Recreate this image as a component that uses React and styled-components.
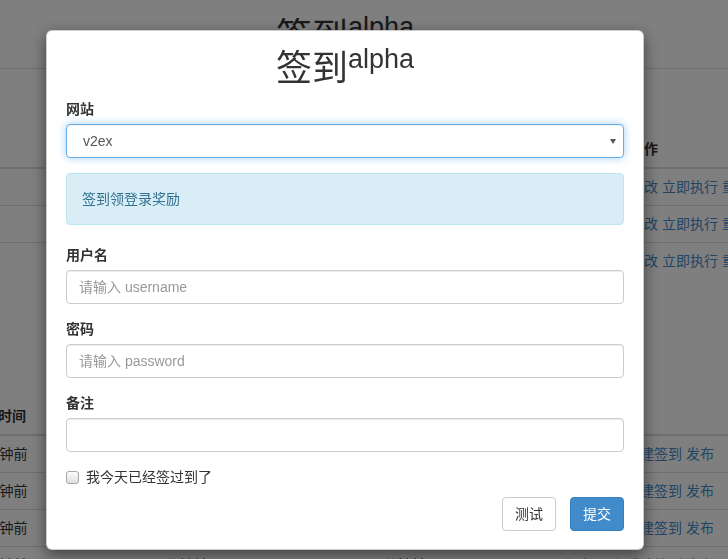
import React from "react";
import styled, { createGlobalStyle } from "styled-components";

const GlobalStyle = createGlobalStyle`
  *, *::before, *::after { box-sizing: border-box; }
  html, body { margin: 0; padding: 0; overflow: hidden; }
  body {
    font-family: "Liberation Sans", Arial, "Noto Sans CJK SC", sans-serif;
    font-size: 14px;
    line-height: 20px;
    color: #333;
    background: #fff;
  }
`;

const Page = styled.div`
  width: 728px;
  height: 559px;
  overflow: hidden;
`;

const Header = styled.header`
  padding: 17px 0 11px;
  border-bottom: 1px solid #ddd;
`;

const Title = styled.h1`
  margin: ${(p) => (p.$modal ? "0 0 10px" : "0")};
  width: ${(p) => (p.$modal ? "auto" : "690px")};
  font-size: 36px;
  line-height: 40px;
  font-weight: 400;
  color: #333;
  text-align: center;
`;

const Sup = styled.sup`
  font-size: 75%;
  line-height: 0;
  position: relative;
  top: -0.5em;
  vertical-align: baseline;
`;

const Table = styled.table`
  width: 800px;
  margin-left: -38px;
  margin-top: ${(p) => p.$top}px;
  border-collapse: collapse;
  table-layout: fixed;
`;

const Th = styled.th`
  text-align: left;
  padding: 8px;
  line-height: 20px;
  font-weight: bold;
  border-bottom: 2px solid #ddd;
  white-space: nowrap;
`;

const Td = styled.td`
  padding: 8px;
  line-height: 20px;
  border-top: 1px solid #ddd;
  white-space: nowrap;
`;

const Link = styled.a`
  color: #428bca;
  text-decoration: none;
  margin-right: 4px;
`;

const Layer = styled.div`
  position: fixed;
  inset: 0;
  background: rgba(0, 0, 0, 0.5);
  padding: 30px 0 0 46px;
`;

const Dialog = styled.div`
  width: 598px;
  background: #fff;
  border: 1px solid rgba(0, 0, 0, 0.2);
  border-radius: 6px;
  box-shadow: 0 5px 15px rgba(0, 0, 0, 0.5);
  padding: 18px 19px 18px;
`;

const FormGroup = styled.div`
  margin-bottom: 15px;
`;

const Label = styled.label`
  display: block;
  font-weight: bold;
  margin-bottom: 5px;
`;

const SelectWrap = styled.div`
  position: relative;
`;

const Select = styled.select`
  display: block;
  width: 100%;
  height: 34px;
  padding: 0 16px;
  font: inherit;
  color: #555;
  background: #fff;
  border: 1px solid #66afe9;
  border-radius: 4px;
  outline: none;
  appearance: none;
  box-shadow: inset 0 1px 1px rgba(0, 0, 0, 0.075), 0 0 8px rgba(102, 175, 233, 0.6);
`;

const Caret = styled.span`
  position: absolute;
  right: 8px;
  top: 15px;
  width: 0;
  height: 0;
  border-left: 3px solid transparent;
  border-right: 3px solid transparent;
  border-top: 5px solid #555;
  pointer-events: none;
`;

const Alert = styled.div`
  padding: 15px;
  margin-bottom: 20px;
  border: 1px solid #bce8f1;
  border-radius: 4px;
  background: #d9edf7;
  color: #31708f;
`;

const Input = styled.input`
  display: block;
  width: 100%;
  height: 34px;
  padding: 6px 12px;
  font: inherit;
  color: #555;
  background: #fff;
  border: 1px solid #ccc;
  border-radius: 4px;
  outline: none;
  box-shadow: inset 0 1px 1px rgba(0, 0, 0, 0.075);
  &::placeholder { color: #999; }
`;

const CheckRow = styled.label`
  display: flex;
  align-items: center;
  gap: 7px;
  height: 20px;
  margin-bottom: 10px;
  color: #333;
`;

const Check = styled.input`
  appearance: none;
  margin: 0;
  width: 13px;
  height: 13px;
  border: 1px solid #a6a6a6;
  border-radius: 3px;
  background: linear-gradient(#fdfdfd, #dedede);
`;

const Footer = styled.div`
  display: flex;
  justify-content: flex-end;
  gap: 14px;
`;

const Button = styled.button`
  height: 34px;
  padding: 6px 12px;
  font: inherit;
  line-height: 20px;
  border-radius: 4px;
  border: 1px solid ${(p) => (p.$primary ? "#357ebd" : "#ccc")};
  background: ${(p) => (p.$primary ? "#428bca" : "#fff")};
  color: ${(p) => (p.$primary ? "#fff" : "#333")};
  cursor: pointer;
`;

const jobs = [
  { id: 1, site: "v2ex", user: "alice", note: "每日", status: "成功" },
  { id: 2, site: "zimuzu", user: "bob", note: "每日", status: "成功" },
  { id: 3, site: "smzdm", user: "carol", note: "每日", status: "成功" },
];

const logs = [
  { a: "12分钟前", b: "12分钟前", c: "12分钟前" },
  { a: "12分钟前", b: "12分钟前", c: "12分钟前" },
  { a: "12分钟前", b: "12分钟前", c: "12分钟前" },
  { a: "12分钟前", b: "12分钟前", c: "12分钟前" },
];

export default function App() {
  return (
    <>
      <GlobalStyle />
      <Page>
        <Header>
          <Title>
            签到<Sup>alpha</Sup>
          </Title>
        </Header>

        <Table $top={62}>
          <colgroup>
            <col style={{ width: 160 }} />
            <col style={{ width: 160 }} />
            <col style={{ width: 180 }} />
            <col style={{ width: 160 }} />
            <col style={{ width: 140 }} />
          </colgroup>
          <thead>
            <tr>
              <Th>ID</Th>
              <Th>网站</Th>
              <Th>用户名</Th>
              <Th>状态</Th>
              <Th>操作</Th>
            </tr>
          </thead>
          <tbody>
            {jobs.map((j) => (
              <tr key={j.id}>
                <Td>{j.id}</Td>
                <Td>{j.site}</Td>
                <Td>{j.user}</Td>
                <Td>{j.status}</Td>
                <Td>
                  <Link>修改</Link>
                  <Link>立即执行</Link>
                  <Link>重置</Link>
                </Td>
              </tr>
            ))}
          </tbody>
        </Table>

        <Table $top={119}>
          <colgroup>
            <col style={{ width: 180 }} />
            <col style={{ width: 218 }} />
            <col style={{ width: 194 }} />
            <col style={{ width: 208 }} />
          </colgroup>
          <thead>
            <tr>
              <Th>签到时间</Th>
              <Th>创建时间</Th>
              <Th>更新时间</Th>
              <Th>操作</Th>
            </tr>
          </thead>
          <tbody>
            {logs.map((l, i) => (
              <tr key={i}>
                <Td>{l.a}</Td>
                <Td>{l.b}</Td>
                <Td>{l.c}</Td>
                <Td>
                  <Link>修改</Link>
                  <Link>删除</Link>
                  <Link>重建签到</Link>
                  <Link>发布</Link>
                </Td>
              </tr>
            ))}
          </tbody>
        </Table>
      </Page>

      <Layer>
        <Dialog>
          <Title $modal>
            签到<Sup>alpha</Sup>
          </Title>
          <FormGroup>
            <Label htmlFor="site">网站</Label>
            <SelectWrap>
              <Select id="site" defaultValue="v2ex">
                <option value="v2ex">v2ex</option>
              </Select>
              <Caret />
            </SelectWrap>
          </FormGroup>
          <Alert>签到领登录奖励</Alert>
          <FormGroup>
            <Label htmlFor="username">用户名</Label>
            <Input id="username" placeholder="请输入 username" />
          </FormGroup>
          <FormGroup>
            <Label htmlFor="password">密码</Label>
            <Input id="password" type="password" placeholder="请输入 password" />
          </FormGroup>
          <FormGroup>
            <Label htmlFor="note">备注</Label>
            <Input id="note" />
          </FormGroup>
          <CheckRow>
            <Check type="checkbox" />
            我今天已经签过到了
          </CheckRow>
          <Footer>
            <Button>测试</Button>
            <Button $primary>提交</Button>
          </Footer>
        </Dialog>
      </Layer>
    </>
  );
}
